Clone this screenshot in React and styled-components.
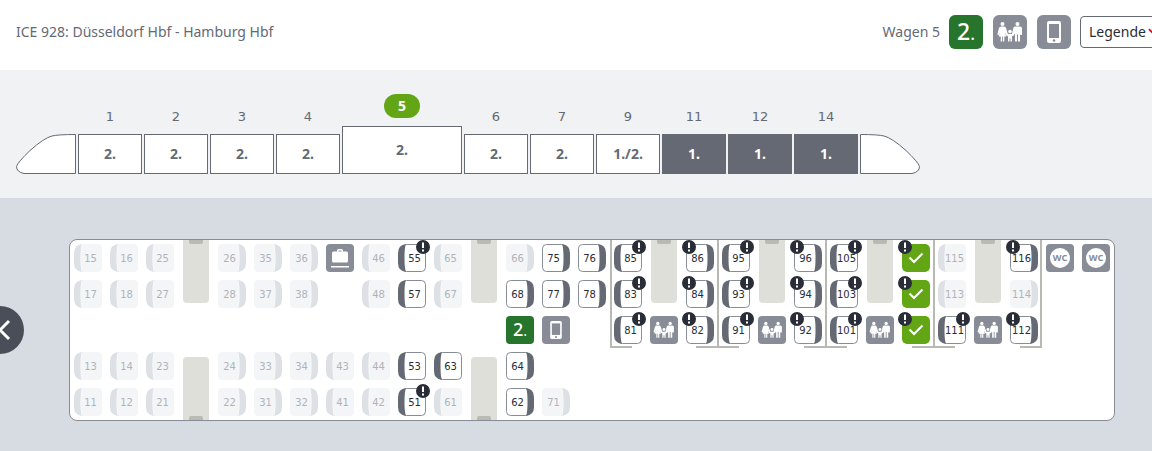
import React from "react";
import styled, { createGlobalStyle, css } from "styled-components";

const color = {
  text: "#646973",
  dark: "#282d37",
  grey: "#878c96",
  green: "#63a615",
  secondClass: "#27742c",
  strip: "#f0f2f4",
  floor: "#d7dce3",
};

const GlobalStyle = createGlobalStyle`
  *, *::before, *::after { box-sizing: border-box; }
  body {
    margin: 0;
    background: ${color.floor};
    color: ${color.text};
    font: 14px/20px "Noto Sans", "Open Sans", sans-serif;
  }
  button { font: inherit; color: inherit; padding: 0; margin: 0; border: 0; background: none; cursor: pointer; }
  button:disabled { cursor: default; }
`;

const Page = styled.div`
  overflow: hidden;
`;

const Header = styled.header`
  display: flex;
  align-items: center;
  justify-content: space-between;
  height: 70px;
  padding: 0 0 6px 16px;
  background: #fff;
`;

const Title = styled.h1`
  margin: 0;
  font-size: 14px;
  font-weight: 400;
`;

const CoachInfo = styled.div`
  display: flex;
  align-items: center;
  gap: 9px;
  margin-right: -18px;
`;

const Features = styled.div`
  display: flex;
  gap: 10px;
`;

const LegendButton = styled.button`
  display: flex;
  align-items: center;
  gap: 2px;
  width: 90px;
  height: 32px;
  padding: 0 8px;
  border: 1px solid ${color.text};
  border-radius: 4px;
  color: ${color.dark};
`;

const Tile = styled.span`
  display: flex;
  flex: none;
  align-items: center;
  justify-content: center;
  width: ${(p) => p.$size}px;
  height: ${(p) => p.$size}px;
  border-radius: ${(p) => (p.$size > 30 ? 6 : 4)}px;
  background: ${(p) => (p.$second ? color.secondClass : color.grey)};
  color: #fff;
  font-size: ${(p) => (p.$size > 30 ? 23 : 18)}px;
  font-weight: 500;
  svg { width: 100%; height: 100%; display: block; }
`;

const Dot = styled.span`
  font-size: ${(p) => (p.$size > 30 ? 18 : 14)}px;
  font-weight: 400;
`;

const TrainStrip = styled.nav`
  display: flex;
  align-items: flex-end;
  gap: 2px;
  padding: 24px 16px;
  background: ${color.strip};
`;

const Nose = styled.svg`
  flex: none;
  width: 60px;
  height: 40px;
  fill: #fff;
  stroke: ${color.text};
`;

const Car = styled.button`
  display: flex;
  flex: none;
  flex-direction: column;
  align-items: center;
  gap: ${(p) => (p.$active ? 8 : 7)}px;
  width: ${(p) => (p.$active ? 120 : 64)}px;
`;

const CarNumber = styled.span`
  font-family: "DejaVu Sans", sans-serif;
  font-size: 13px;
  ${(p) =>
    p.$active &&
    css`
      width: 36px;
      border-radius: 12px;
      background: ${color.green};
      color: #fff;
      font-family: "Noto Sans", sans-serif;
      font-size: 14px;
      font-weight: 700;
      line-height: 24px;
    `}
`;

const CarBody = styled.span`
  display: flex;
  align-items: center;
  justify-content: center;
  width: 100%;
  height: ${(p) => (p.$active ? 48 : 40)}px;
  border: 1px solid ${color.text};
  background: ${(p) => (p.$first ? color.text : "#fff")};
  color: ${(p) => (p.$first ? "#fff" : color.text)};
  font-weight: 700;
`;

const PlanArea = styled.main`
  position: relative;
  padding: 41px 37px 30px 69px;
`;

const PreviousButton = styled.button`
  position: absolute;
  left: -24px;
  top: 108px;
  width: 48px;
  height: 48px;
  border-radius: 50%;
  background: #4a4e58;
  svg { display: block; width: 48px; height: 48px; }
`;

const Coach = styled.section`
  display: grid;
  grid-template-columns: repeat(29, 36px);
  grid-template-rows: repeat(5, 36px);
  place-items: center;
  width: max-content;
  border: 1px solid ${color.grey};
  border-radius: 8px;
  background: #fff;
`;

const Cell = styled.div`
  grid-area: ${(p) => `${p.$row} / ${p.$col}`};
`;

const Compartment = styled.div`
  grid-area: 1 / ${(p) => p.$col} / span 3 / span 3;
  place-self: stretch;
  margin-left: ${(p) => (p.$start ? 0 : -1)}px;
  border: solid #b9b9b4;
  border-width: 0 ${(p) => (p.$end ? 2 : 0)}px 0 2px;
  background:
    linear-gradient(#b9b9b4, #b9b9b4) left bottom / 20px 2px no-repeat,
    linear-gradient(#b9b9b4, #b9b9b4) right bottom / ${(p) => (p.$end ? 20 : 22)}px 2px no-repeat;
`;

const Table = styled.div`
  grid-area: ${(p) => (p.$bottom ? 4 : 1)} / ${(p) => p.$col} / span 2;
  align-self: ${(p) => (p.$bottom ? "end" : "start")};
  display: flex;
  justify-content: center;
  align-items: ${(p) => (p.$bottom ? "flex-end" : "flex-start")};
  width: 26px;
  height: 63px;
  border-radius: ${(p) => (p.$bottom ? "4px 4px 0 0" : "0 0 4px 4px")};
  background: #dddfd8;
  &::before {
    content: "";
    width: 14px;
    height: 4px;
    border-radius: ${(p) => (p.$bottom ? "2px 2px 0 0" : "0 0 2px 2px")};
    background: #b9bab4;
  }
`;

const SeatButton = styled.button`
  position: relative;
  display: flex;
  align-items: center;
  justify-content: center;
  width: 28px;
  height: 28px;
  padding: ${(p) => (p.$flip ? "1px 5px 0 0" : "1px 0 0 5px")};
  color: ${(p) => (p.disabled ? "#afb4bb" : color.dark)};
  font-family: "DejaVu Sans", sans-serif;
  font-size: 10px;
  white-space: nowrap;
  ${(p) =>
    p.$picked &&
    css`
      padding: 0;
      border-radius: 5px;
      background: ${color.green};
    `}
`;

const SeatShape = styled.svg`
  position: absolute;
  inset: 0;
  width: 28px;
  height: 28px;
  transform: ${(p) => (p.$flip ? "scaleX(-1)" : "none")};
`;

const SeatNumber = styled.span`
  position: relative;
`;

const Notice = styled.svg`
  position: absolute;
  top: -4px;
  ${(p) => (p.$flip ? "left" : "right")}: -4px;
  width: 14px;
  height: 14px;
`;

const WcLabel = styled.span`
  width: 20px;
  height: 20px;
  border-radius: 50%;
  background: #fff;
  color: ${color.grey};
  font-size: 9px;
  font-weight: 700;
  line-height: 20px;
  text-align: center;
`;

const FamilyIcon = () => (
  <svg viewBox="0 0 34 34" fill="#fff" aria-label="Familienbereich" role="img">
    <circle cx="9.500" cy="9" r="2" />
    <path d="M8 11.500h3q1.500 0 2 1.500l2 6.500-1.300.8-1.600-2.600 1.200 3.800h-2V26.500H9.900V21.500h-.8v5H7.700v-5h-2L6.900 17.700 5.700 20.300 4.300 19.500 6 13q.5-1.500 2-1.500z" />
    <circle cx="24.500" cy="9" r="2" />
    <path d="M22 11.500h5q2 0 2 2V20h-1.700v-1l-.3 0v7.500h-2V19.500h-1v7H22v-8l-1.800 2.300-1.400-1L20.200 13.500q.3-2 1.800-2z" />
    <circle cx="17" cy="16.500" r="1.800" />
    <path d="M13.300 18.500l2.200.6h3l2.200-.6.600 1.500-2.300 1.300v5.200h-1.500v-3h-1v3H15v-5.200L12.700 20z" />
  </svg>
);

const PhoneIcon = () => (
  <svg viewBox="0 0 34 34" aria-label="Handybereich" role="img">
    <rect x="10" y="6" width="14" height="22" rx="2" fill="#fff" />
    <rect x="12" y="9" width="10" height="14" fill={color.grey} />
    <circle cx="17" cy="25.500" r="1.300" fill={color.grey} />
  </svg>
);

const LuggageIcon = () => (
  <svg viewBox="0 0 28 28" fill="#fff" aria-label="Gepäck" role="img">
    <path fillRule="evenodd" d="M7.500 7.500h3.500V6.500q0-1.500 1.500-1.500h3q1.500 0 1.500 1.500v1h3.500q1.500 0 1.500 1.500v8q0 1.500-1.500 1.500h-13Q6 18.500 6 17V9Q6 7.500 7.500 7.500zm5-1v1h3v-1z" />
    <rect x="5" y="22" width="18" height="1.500" />
  </svg>
);

const SecondClass = ({ size }) => (
  <Tile $size={size} $second>
    <span>2<Dot $size={size}>.</Dot></span>
  </Tile>
);

const NoticeBadge = ({ flip }) => (
  <Notice $flip={flip} viewBox="0 0 14 14" aria-hidden="true">
    <circle cx="7" cy="7" r="7" fill={color.dark} />
    <path d="M6 2.500h2v5.500H6zM6 9.500h2v2H6z" fill="#fff" />
  </Notice>
);

const Seat = ({ row, col, number, flip, free, notice, picked }) => (
  <Cell $row={row} $col={col}>
    <SeatButton
      type="button"
      disabled={!free && !picked}
      $flip={flip}
      $picked={picked}
      aria-label={picked ? "Ausgewählter Sitzplatz" : `Sitzplatz ${number}`}
    >
      {picked ? (
        <svg width="28" height="28" viewBox="0 0 28 28" fill="none" stroke="#fff" strokeWidth="2" aria-hidden="true">
          <path d="M7.500 13.500l4.500 4.500 8.500-8.500" />
        </svg>
      ) : (
        <>
          <SeatShape $flip={flip} viewBox="0 0 28 28" aria-hidden="true">
            {free ? (
              <rect x="4.500" y=".5" width="23" height="27" rx="4" fill="#fff" stroke={color.grey} />
            ) : (
              <path d="M8 0h16q4 0 4 4v20q0 4-4 4H8q-2-14 0-28z" fill="#f3f5f7" />
            )}
            <path
              d="M8 0Q0 1 0 9v10q0 8 8 9-1.500-3-1.500-14T8 0z"
              fill={free ? color.text : "#dde1e5"}
            />
          </SeatShape>
          <SeatNumber>{number}</SeatNumber>
        </>
      )}
      {notice && <NoticeBadge flip={flip} />}
    </SeatButton>
  </Cell>
);

const cars = [
  ["1", "2."], ["2", "2."], ["3", "2."], ["4", "2."], ["5", "2."], ["6", "2."],
  ["7", "2."], ["9", "1./2."], ["11", "1."], ["12", "1."], ["14", "1."],
];

/* column, backrest on the right, seats by row: [row, number, state]
   state: f = free, n = free with notice, p = picked, none = taken */
const seatColumns = [
  [1, false, [[1, 15], [2, 17], [4, 13], [5, 11]]],
  [2, false, [[1, 16], [2, 18], [4, 14], [5, 12]]],
  [3, false, [[1, 25], [2, 27], [4, 23], [5, 21]]],
  [5, true, [[1, 26], [2, 28], [4, 24], [5, 22]]],
  [6, true, [[1, 35], [2, 37], [4, 33], [5, 31]]],
  [7, true, [[1, 36], [2, 38], [4, 34], [5, 32]]],
  [8, false, [[4, 43], [5, 41]]],
  [9, false, [[1, 46], [2, 48], [4, 44], [5, 42]]],
  [10, false, [[1, 55, "n"], [2, 57, "f"], [4, 53, "f"], [5, 51, "n"]]],
  [11, false, [[1, 65], [2, 67], [4, 63, "f"], [5, 61]]],
  [13, true, [[1, 66], [2, 68, "f"], [4, 64, "f"], [5, 62, "f"]]],
  [14, true, [[1, 75, "f"], [2, 77, "f"], [5, 71]]],
  [15, true, [[1, 76, "f"], [2, 78, "f"]]],
  [16, false, [[1, 85, "n"], [2, 83, "n"], [3, 81, "n"]]],
  [18, true, [[1, 86, "n"], [2, 84, "n"], [3, 82, "n"]]],
  [19, false, [[1, 95, "n"], [2, 93, "n"], [3, 91, "n"]]],
  [21, true, [[1, 96, "n"], [2, 94, "n"], [3, 92, "n"]]],
  [22, false, [[1, 105, "n"], [2, 103, "n"], [3, 101, "n"]]],
  [24, true, [[1, 106, "p"], [2, 104, "p"], [3, 102, "p"]]],
  [25, false, [[1, 115], [2, 113], [3, 111, "n"]]],
  [27, true, [[1, 116, "n"], [2, 114], [3, 112, "n"]]],
];

const compartments = [16, 19, 22, 25];

export default function App() {
  return (
    <Page>
      <GlobalStyle />
      <Header>
        <Title>ICE 928: Düsseldorf Hbf - Hamburg Hbf</Title>
        <CoachInfo>
          <span>Wagen 5</span>
          <Features>
            <SecondClass size={34} />
            <Tile $size={34}><FamilyIcon /></Tile>
            <Tile $size={34}><PhoneIcon /></Tile>
          </Features>
          <LegendButton type="button">
            Legende
            <svg width="14" height="14" viewBox="0 0 14 14" fill="none" stroke="#ec0016" strokeWidth="2" aria-hidden="true">
              <path d="M1 4l6 6 6-6" />
            </svg>
          </LegendButton>
        </CoachInfo>
      </Header>

      <TrainStrip aria-label="Wagen">
        <Nose viewBox="0 0 60 40" aria-hidden="true">
          <path d="M59.500.5v39H8Q.5 38 .5 32.500 2 28 14 16.500 28 4 36 2 42 .5 59.500.5z" />
        </Nose>
        {cars.map(([number, label]) => {
          const active = number === "5";
          return (
            <Car key={number} type="button" $active={active} aria-pressed={active}>
              <CarNumber $active={active}>{number}</CarNumber>
              <CarBody $active={active} $first={label === "1."}>{label}</CarBody>
            </Car>
          );
        })}
        <Nose viewBox="0 0 60 40" aria-hidden="true">
          <path d="M.5.5v39H52q7.500-1.500 7.500-7Q58 28 46 16.500 32 4 24 2 18 .5.5.5z" />
        </Nose>
      </TrainStrip>

      <PlanArea>
        <Coach aria-label="Sitzplan Wagen 5">
          {compartments.map((col) => (
            <Compartment key={col} $col={col} $start={col === 16} $end={col === 25} />
          ))}
          {[4, 12, 17, 20, 23, 26].map((col) => <Table key={col} $col={col} />)}
          {[4, 12].map((col) => <Table key={col} $col={col} $bottom />)}
          <Cell $row={1} $col={8}><Tile $size={28}><LuggageIcon /></Tile></Cell>
          <Cell $row={3} $col={13}><SecondClass size={28} /></Cell>
          <Cell $row={3} $col={14}><Tile $size={28}><PhoneIcon /></Tile></Cell>
          {compartments.map((col) => (
            <Cell key={col} $row={3} $col={col + 1}><Tile $size={28}><FamilyIcon /></Tile></Cell>
          ))}
          {[28, 29].map((col) => (
            <Cell key={col} $row={1} $col={col}><Tile $size={28}><WcLabel>WC</WcLabel></Tile></Cell>
          ))}
          {seatColumns.flatMap(([col, flip, seats]) =>
            seats.map(([row, number, state]) => (
              <Seat
                key={number}
                row={row}
                col={col}
                number={number}
                flip={flip}
                free={state === "f" || state === "n"}
                notice={state === "n" || state === "p"}
                picked={state === "p"}
              />
            ))
          )}
        </Coach>
        <PreviousButton type="button" aria-label="Vorheriger Wagen">
          <svg viewBox="0 0 48 48" fill="none" stroke="#fff" strokeWidth="3" aria-hidden="true">
            <path d="M33 15l-9 9 9 9" />
          </svg>
        </PreviousButton>
      </PlanArea>
    </Page>
  );
}
